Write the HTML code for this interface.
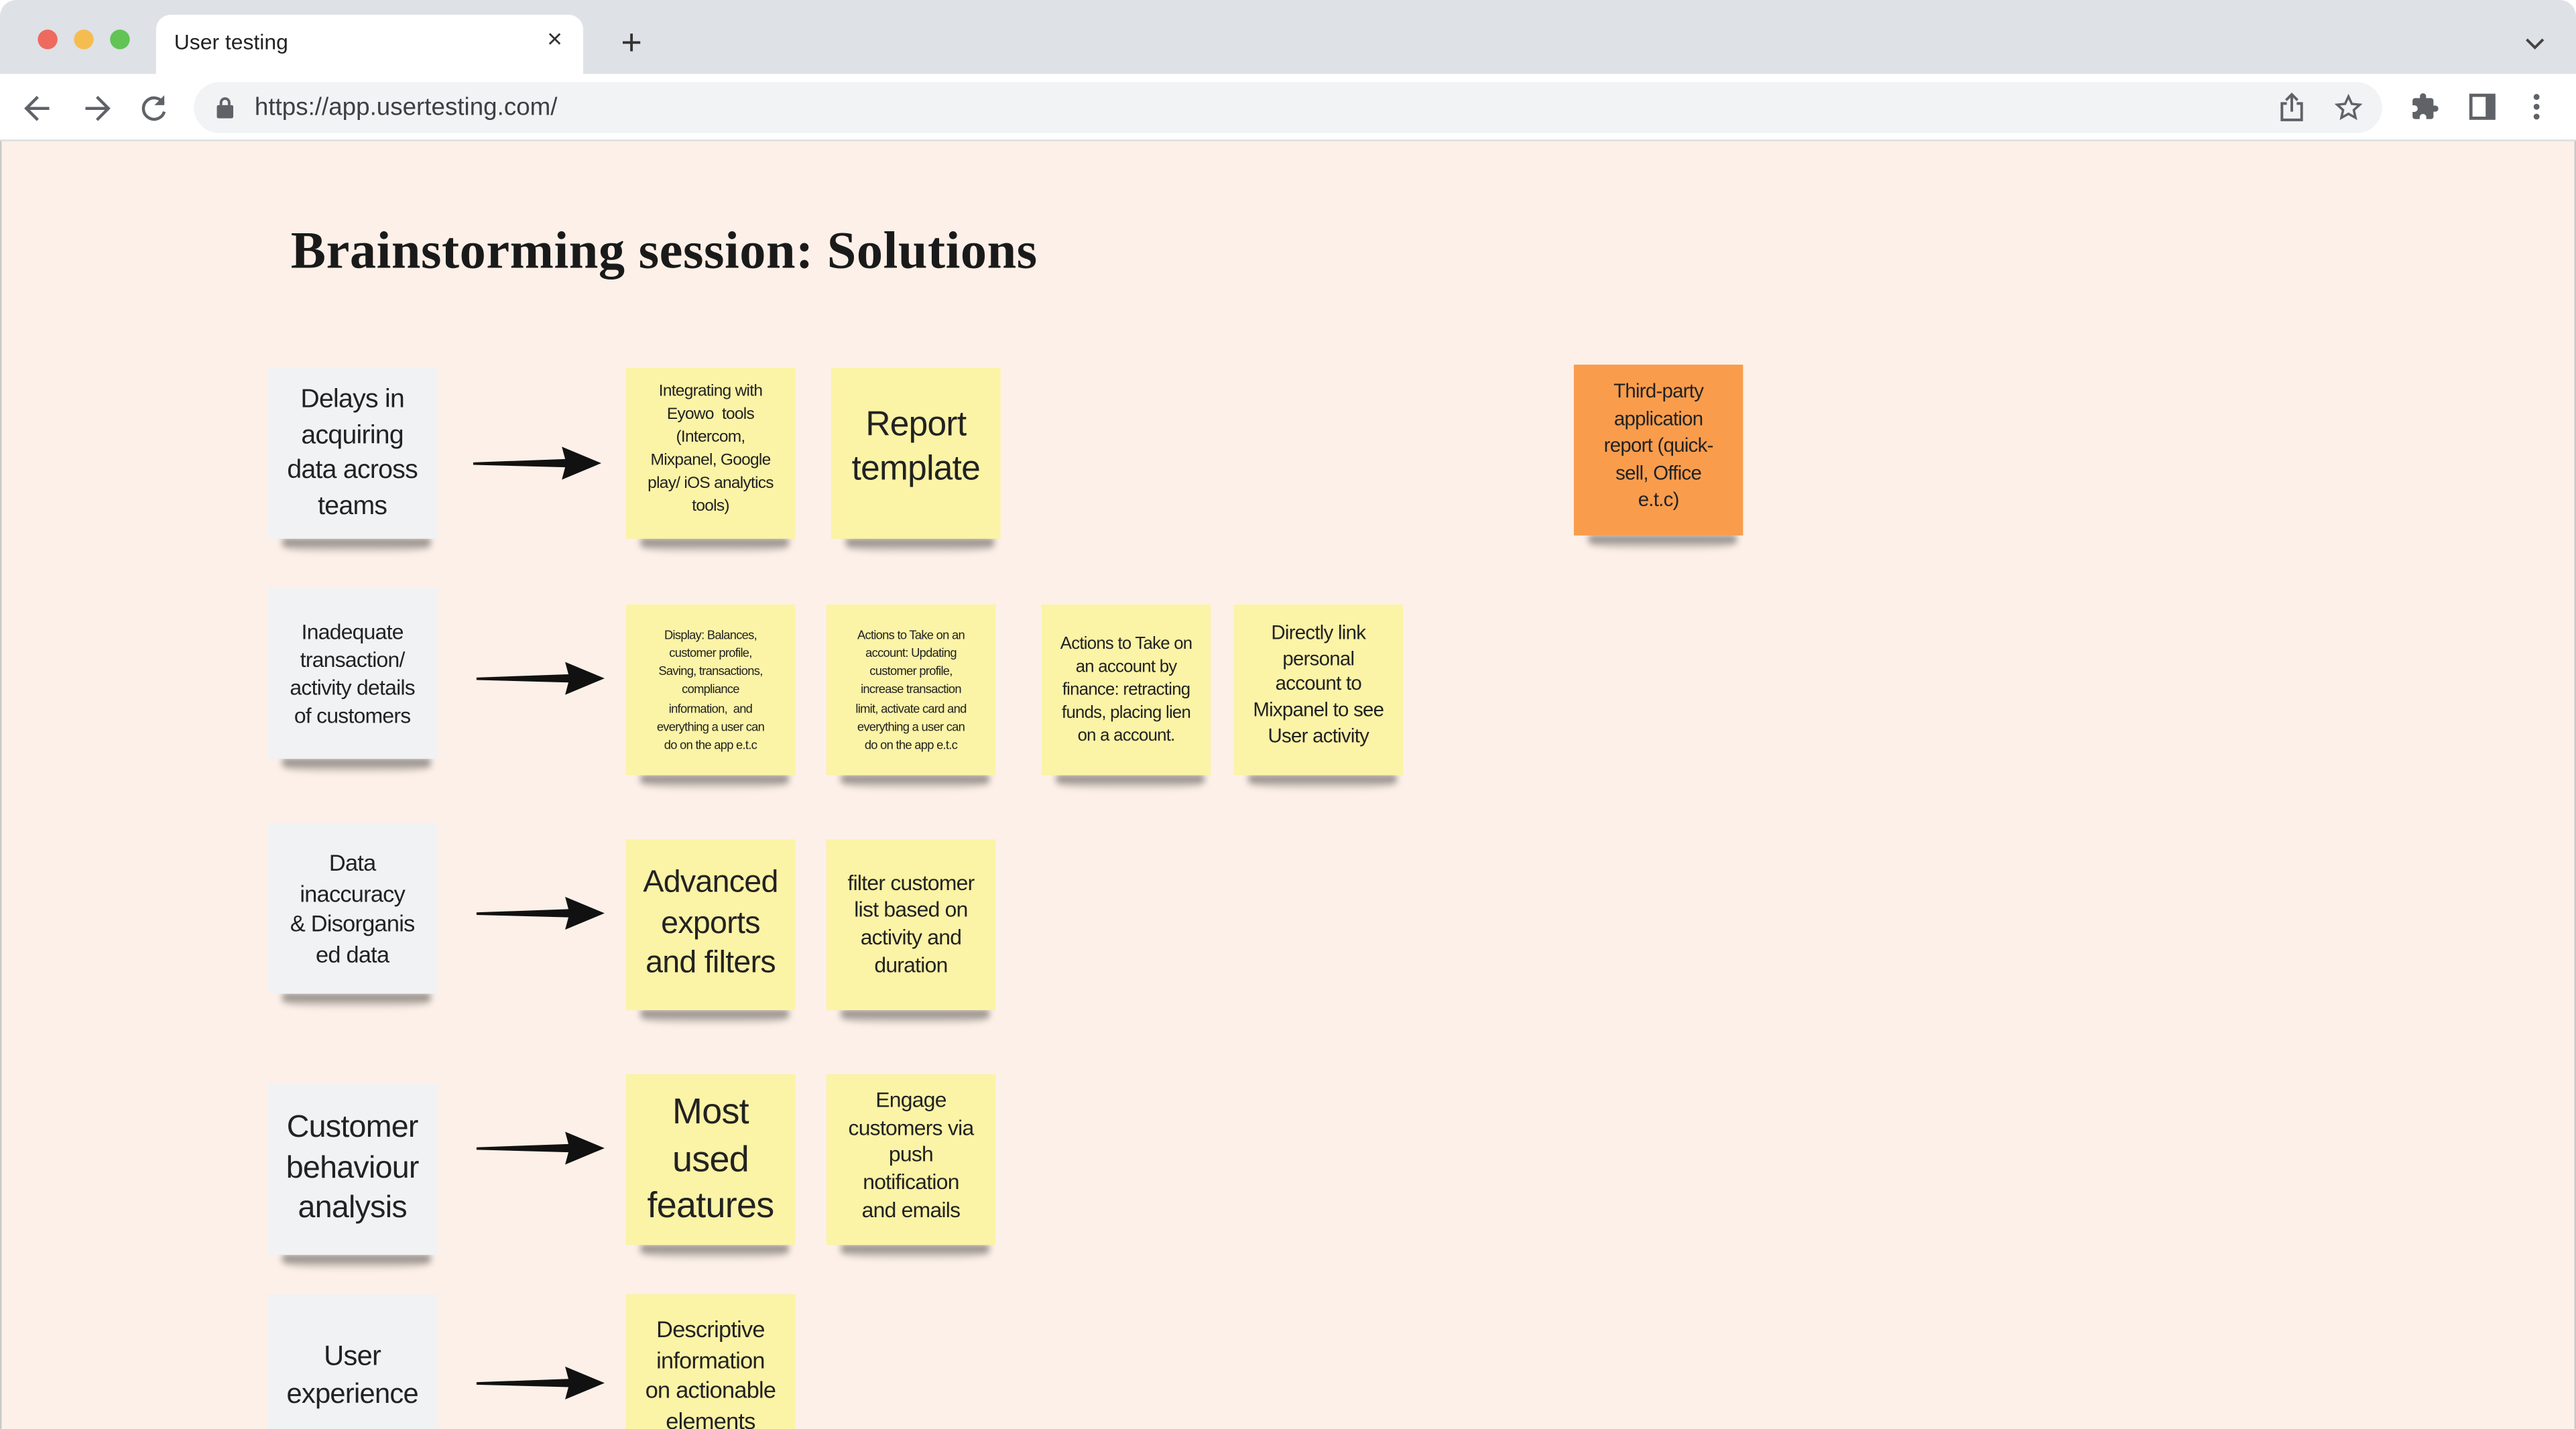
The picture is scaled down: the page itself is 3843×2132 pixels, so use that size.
<!DOCTYPE html>
<html><head><meta charset="utf-8">
<style>
html,body{margin:0;padding:0;width:3843px;height:2132px;overflow:hidden;background:#fff;}
#w{position:absolute;left:0;top:0;width:1568px;height:870px;transform:scale(2.45089,2.45057);transform-origin:0 0;font-family:"Liberation Sans",sans-serif;overflow:hidden;border-radius:10px 10px 0 0;background:#dee1e6;}
.abs{position:absolute;}
.dot{position:absolute;top:18px;width:12px;height:12px;border-radius:50%;}
#tab{left:95px;top:9px;width:260px;height:37px;background:#fff;border-radius:9px 9px 0 0;}
#tb{left:0;top:45px;width:1568px;height:40px;background:#fff;border-bottom:1px solid #dadce0;}
#url{left:118px;top:5px;width:1332px;height:31px;background:#f1f3f4;border-radius:16px;}
#content{left:1px;top:86px;width:1566px;height:784px;background:#fcf0e8;}
h1{position:absolute;left:177px;top:134px;margin:0;font-family:"Liberation Serif",serif;font-weight:bold;font-size:32px;color:#1a1a1a;letter-spacing:0.2px;}
.s{position:absolute;width:103px;height:104px;display:flex;align-items:center;justify-content:center;text-align:center;font-family:"Liberation Sans",sans-serif;color:#222;box-sizing:border-box;padding:0 4px;letter-spacing:-0.3px;}
.sh{position:absolute;width:90px;height:9px;background:linear-gradient(rgba(0,0,0,.55),rgba(0,0,0,0));filter:blur(2px);border-radius:0 0 50% 50%;}
.g{background:#f0f2f4;}
.y{background:#fbf3a6;}
.o{background:#f99d4d;}
.arr{position:absolute;width:80px;height:24px;}
</style></head><body>
<div id="w">
<div class="dot" style="left:23px;background:#ee6a5f"></div>
<div class="dot" style="left:45px;background:#f5bd4f"></div>
<div class="dot" style="left:67px;background:#61c454"></div>
<div id="tab" class="abs">
 <div class="abs" style="left:11px;top:9px;font-size:13px;color:#222">User testing</div>
 <div class="abs" style="left:238px;top:7px;font-size:16px;color:#333">×</div>
</div>
<div class="abs" style="left:378px;top:13px;font-size:22px;color:#333;font-weight:300">+</div>
<svg class="abs" style="left:1536px;top:19px" width="14" height="14" viewBox="0 0 14 14"><path d="M2 5l5 5 5-5" fill="none" stroke="#444" stroke-width="1.6"/></svg>
<div id="tb" class="abs">
 <svg class="abs" style="left:14px;top:12px" width="18" height="18" viewBox="0 0 18 18"><path d="M16 9H3M9 2L2 9l7 7" fill="none" stroke="#5f6368" stroke-width="1.8"/></svg>
 <svg class="abs" style="left:50px;top:12px" width="18" height="18" viewBox="0 0 18 18"><path d="M2 9h13M9 2l7 7-7 7" fill="none" stroke="#5f6368" stroke-width="1.8"/></svg>
 <svg class="abs" style="left:85px;top:12px" width="18" height="18" viewBox="0 0 18 18"><path d="M14.5 6A6.5 6.5 0 1 0 15 11" fill="none" stroke="#5f6368" stroke-width="1.8"/><path d="M15 1v6h-6z" fill="#5f6368"/></svg>
 <div id="url" class="abs">
  <svg class="abs" style="left:14px;top:9px" width="10" height="13" viewBox="0 0 10 13"><rect x="0" y="5" width="10" height="8" rx="1" fill="#5f6368"/><path d="M2.5 5V3.5a2.5 2.5 0 0 1 5 0V5" fill="none" stroke="#5f6368" stroke-width="1.6"/></svg>
  <div class="abs" style="left:37px;top:7px;font-size:15px;color:#3c4043">https://app.usertesting.com/</div>
  <svg class="abs" style="left:1269px;top:6px" width="16" height="19" viewBox="0 0 16 19"><path d="M5 7H2v10h12V7h-3M8 12V2M4.5 5L8 1.5 11.5 5" fill="none" stroke="#5f6368" stroke-width="1.6"/></svg>
  <svg class="abs" style="left:1303px;top:7px" width="17" height="17" viewBox="0 0 24 24"><path d="M12 2.5l2.9 6.3 6.8.7-5.1 4.6 1.5 6.7L12 17.3l-6.1 3.5 1.5-6.7-5.1-4.6 6.8-.7z" fill="none" stroke="#5f6368" stroke-width="2"/></svg>
 </div>
 <svg class="abs" style="left:1467px;top:11px" width="18" height="18" viewBox="0 0 24 24"><path d="M20.5 11H19V7a2 2 0 0 0-2-2h-4V3.5a2.5 2.5 0 0 0-5 0V5H4a2 2 0 0 0-2 2v3.8h1.5a2.7 2.7 0 0 1 0 5.4H2V20a2 2 0 0 0 2 2h3.8v-1.5a2.7 2.7 0 0 1 5.4 0V22H17a2 2 0 0 0 2-2v-4h1.5a2.5 2.5 0 0 0 0-5z" fill="#5f6368"/></svg>
 <svg class="abs" style="left:1503px;top:12px" width="16" height="16" viewBox="0 0 16 16"><rect x="1" y="1" width="14" height="14" fill="none" stroke="#5f6368" stroke-width="2"/><rect x="10" y="1" width="5" height="14" fill="#5f6368"/></svg>
 <svg class="abs" style="left:1540px;top:11px" width="8" height="18" viewBox="0 0 8 18"><circle cx="4" cy="3" r="1.8" fill="#5f6368"/><circle cx="4" cy="9" r="1.8" fill="#5f6368"/><circle cx="4" cy="15" r="1.8" fill="#5f6368"/></svg>
</div>
<div id="content" class="abs"></div>
<div class="abs" style="left:0;top:86px;width:1px;height:784px;background:#c9c9c9"></div>
<div class="abs" style="left:1567px;top:86px;width:1px;height:784px;background:#c9c9c9"></div>
<h1>Brainstorming session: Solutions</h1>

<svg width="0" height="0" style="position:absolute"><defs><path id="ar" d="M0 11.5L56 9.5 54 2 78 12 54 22 56 14.5 0 13z" fill="#111"/></defs></svg>

<!-- shadows -->
<div class="sh" style="left:172px;top:328px"></div>
<div class="sh" style="left:390px;top:328px"></div>
<div class="sh" style="left:515px;top:328px"></div>
<div class="sh" style="left:967px;top:326px"></div>
<div class="sh" style="left:172px;top:462px"></div>
<div class="sh" style="left:390px;top:472px"></div>
<div class="sh" style="left:512px;top:472px"></div>
<div class="sh" style="left:643px;top:472px"></div>
<div class="sh" style="left:760px;top:472px"></div>
<div class="sh" style="left:172px;top:605px"></div>
<div class="sh" style="left:390px;top:615px"></div>
<div class="sh" style="left:512px;top:615px"></div>
<div class="sh" style="left:172px;top:764px"></div>
<div class="sh" style="left:390px;top:758px"></div>
<div class="sh" style="left:512px;top:758px"></div>

<!-- row1 -->
<div class="s g" style="left:163px;top:224px;font-size:16px;line-height:21.5px">Delays in<br>acquiring<br>data across<br>teams</div>
<svg class="arr" style="left:288px;top:270px" viewBox="0 0 80 24"><use href="#ar"/></svg>
<div class="s y" style="left:381px;top:224px;font-size:10px;line-height:14px;align-items:flex-start;padding-top:8px">Integrating with<br>Eyowo&nbsp; tools<br>(Intercom,<br>Mixpanel, Google<br>play/ iOS analytics<br>tools)</div>
<div class="s y" style="left:506px;top:224px;font-size:21px;line-height:27px;align-items:flex-start;padding-top:21px">Report<br>template</div>
<div class="s o" style="left:958px;top:222px;font-size:12px;line-height:16.5px;align-items:flex-start;padding:8px 4px 0">Third-party<br>application<br>report (quick-<br>sell, Office<br>e.t.c)</div>

<!-- row2 -->
<div class="s g" style="left:163px;top:358px;font-size:13px;line-height:17px">Inadequate<br>transaction/<br>activity details<br>of customers</div>
<svg class="arr" style="left:290px;top:401px" viewBox="0 0 80 24"><use href="#ar"/></svg>
<div class="s y" style="left:381px;top:368px;font-size:7.5px;line-height:11.2px;padding:0 2px">Display: Balances,<br>customer profile,<br>Saving, transactions,<br>compliance<br>information,&nbsp; and<br>everything a user can<br>do on the app e.t.c</div>
<div class="s y" style="left:503px;top:368px;font-size:7.5px;line-height:11.2px;padding:0 2px">Actions to Take on an<br>account: Updating<br>customer profile,<br>increase transaction<br>limit, activate card and<br>everything a user can<br>do on the app e.t.c</div>
<div class="s y" style="left:634px;top:368px;font-size:10.5px;line-height:14px;padding:0 2px">Actions to Take on<br>an account by<br>finance: retracting<br>funds, placing lien<br>on a account.</div>
<div class="s y" style="left:751px;top:368px;font-size:12px;line-height:15.7px;align-items:flex-start;padding:10px 2px 0">Directly link<br>personal<br>account to<br>Mixpanel to see<br>User activity</div>

<!-- row3 -->
<div class="s g" style="left:163px;top:501px;font-size:14px;line-height:18.5px">Data<br>inaccuracy<br>&amp; Disorganis<br>ed data</div>
<svg class="arr" style="left:290px;top:544px" viewBox="0 0 80 24"><use href="#ar"/></svg>
<div class="s y" style="left:381px;top:511px;font-size:19px;line-height:24.5px">Advanced<br>exports<br>and filters</div>
<div class="s y" style="left:503px;top:511px;font-size:13px;line-height:16.7px">filter customer<br>list based on<br>activity and<br>duration</div>

<!-- row4 -->
<div class="s g" style="left:163px;top:660px;font-size:19px;line-height:24.5px">Customer<br>behaviour<br>analysis</div>
<svg class="arr" style="left:290px;top:687px" viewBox="0 0 80 24"><use href="#ar"/></svg>
<div class="s y" style="left:381px;top:654px;font-size:22px;line-height:28.5px">Most<br>used<br>features</div>
<div class="s y" style="left:503px;top:654px;font-size:13px;line-height:16.7px;align-items:flex-start;padding-top:8px">Engage<br>customers via<br>push<br>notification<br>and emails</div>

<!-- row5 -->
<div class="s g" style="left:163px;top:788px;font-size:17px;line-height:23px;align-items:flex-start;padding-top:26px">User<br>experience</div>
<svg class="arr" style="left:290px;top:830px" viewBox="0 0 80 24"><use href="#ar"/></svg>
<div class="s y" style="left:381px;top:788px;font-size:14px;line-height:18.5px;align-items:flex-start;padding-top:12px">Descriptive<br>information<br>on actionable<br>elements</div>
</div>
</body></html>
